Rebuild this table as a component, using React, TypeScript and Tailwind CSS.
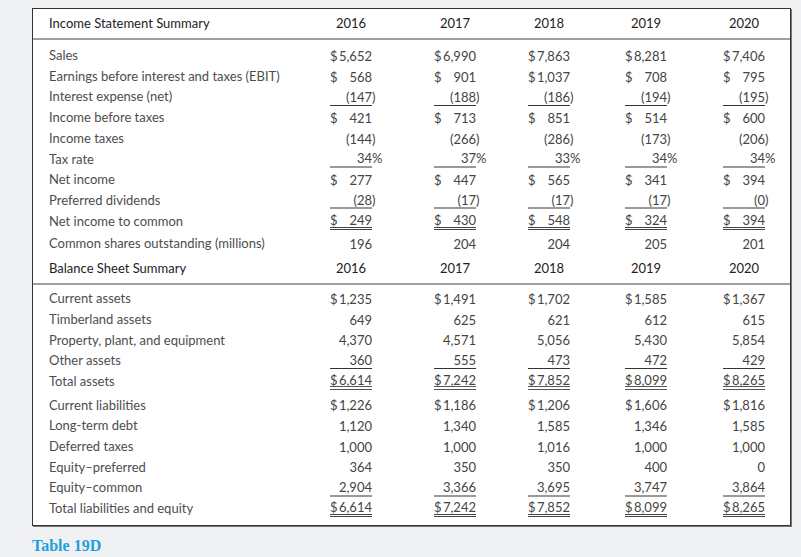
import React from "react";

type Line = "none" | "black" | "gray" | "double" | "thick";

const grid = "grid grid-cols-[281px_42px_104px_94px_97px_98px] items-center";

const lineCls: Record<Line, string> = {
  none: "",
  black: "border-b border-[#333]",
  gray: "border-b-2 border-[#9a9a9a]",
  double: "border-b-[3px] border-double border-[#444]",
  thick: "border-b-4 border-double border-[#555]",
};

function Cell({ v, line }: { v: string; line: Line }) {
  let dollar = false;
  let main = v;
  let suffix = "";
  if (main.startsWith("$")) {
    dollar = true;
    main = main.slice(1).trim();
  }
  if (main.endsWith(")") || main.endsWith("%")) {
    suffix = main.slice(-1);
    main = main.slice(0, -1);
  }
  return (
    <div className="flex justify-end">
      <div className={`w-[42px] h-[17px] flex justify-between items-center leading-[16px] ${lineCls[line]}`}>
        <span>{dollar ? "$" : ""}</span>
        <span className="whitespace-nowrap">
          {main}
          <span className="inline-block w-0">{suffix}</span>
        </span>
      </div>
    </div>
  );
}

function Row({ label, vals, line = "none" }: { label: string; vals: string[]; line?: Line }) {
  return (
    <div className={`${grid} h-[20.7px]`}>
      <div className="whitespace-nowrap text-[#4d4d4d]">{label}</div>
      {vals.map((v, i) => (
        <Cell key={i} v={v} line={line} />
      ))}
    </div>
  );
}

function Header({ title }: { title: string }) {
  return (
    <div className={`${grid} h-full text-[#222]`}>
      <div>{title}</div>
      {["2016", "2017", "2018", "2019", "2020"].map((y) => (
        <div key={y} className="flex justify-end">
          <div className="w-[42px] text-center">{y}</div>
        </div>
      ))}
    </div>
  );
}

export default function App() {
  return (
    <div className="min-h-[557px] w-[801px] bg-[#f0f1f3] pt-[8px] pl-[32px] font-['Lato','Liberation_Sans',sans-serif] text-[13px] text-[#444]">
      <div className="w-[759px] h-[518px] bg-white border border-[#333] shadow-[1px_1px_0_#777] flex flex-col">
        <div className="h-[31px] pl-[16px] border-b-2 border-[#a0a0a0]">
          <Header title="Income Statement Summary" />
        </div>
        <div className="pl-[16px] pt-[5.5px]">
          <Row label="Sales" vals={["$5,652", "$6,990", "$7,863", "$8,281", "$7,406"]} />
          <Row label="Earnings before interest and taxes (EBIT)" vals={["$ 568", "$ 901", "$1,037", "$ 708", "$ 795"]} />
          <Row label="Interest expense (net)" vals={["(147)", "(188)", "(186)", "(194)", "(195)"]} line="black" />
          <Row label="Income before taxes" vals={["$ 421", "$ 713", "$ 851", "$ 514", "$ 600"]} />
          <Row label="Income taxes" vals={["(144)", "(266)", "(286)", "(173)", "(206)"]} />
          <Row label="Tax rate" vals={["34%", "37%", "33%", "34%", "34%"]} line="gray" />
          <Row label="Net income" vals={["$ 277", "$ 447", "$ 565", "$ 341", "$ 394"]} />
          <Row label="Preferred dividends" vals={["(28)", "(17)", "(17)", "(17)", "(0)"]} line="gray" />
          <Row label="Net income to common" vals={["$ 249", "$ 430", "$ 548", "$ 324", "$ 394"]} line="double" />
          <div className="h-[2px]" />
          <Row label="Common shares outstanding (millions)" vals={["196", "204", "204", "205", "201"]} />
        </div>
        <div className="h-[30.5px] pl-[16px] border-b-2 border-[#a0a0a0]">
          <Header title="Balance Sheet Summary" />
        </div>
        <div className="pl-[16px] pt-[3.7px]">
          <Row label="Current assets" vals={["$1,235", "$1,491", "$1,702", "$1,585", "$1,367"]} />
          <Row label="Timberland assets" vals={["649", "625", "621", "612", "615"]} />
          <Row label="Property, plant, and equipment" vals={["4,370", "4,571", "5,056", "5,430", "5,854"]} />
          <Row label="Other assets" vals={["360", "555", "473", "472", "429"]} line="black" />
          <Row label="Total assets" vals={["$6,614", "$7,242", "$7,852", "$8,099", "$8,265"]} line="thick" />
          <div className="h-[3px]" />
          <Row label="Current liabilities" vals={["$1,226", "$1,186", "$1,206", "$1,606", "$1,816"]} />
          <Row label="Long-term debt" vals={["1,120", "1,340", "1,585", "1,346", "1,585"]} />
          <Row label="Deferred taxes" vals={["1,000", "1,000", "1,016", "1,000", "1,000"]} />
          <Row label="Equity–preferred" vals={["364", "350", "350", "400", "0"]} />
          <Row label="Equity–common" vals={["2,904", "3,366", "3,695", "3,747", "3,864"]} line="gray" />
          <Row label="Total liabilities and equity" vals={["$6,614", "$7,242", "$7,852", "$8,099", "$8,265"]} line="double" />
        </div>
      </div>
      <div className="mt-[11px] font-['Liberation_Serif',serif] font-bold text-[16px] leading-[18px] text-[#1ea0dc]">Table 19D</div>
    </div>
  );
}
